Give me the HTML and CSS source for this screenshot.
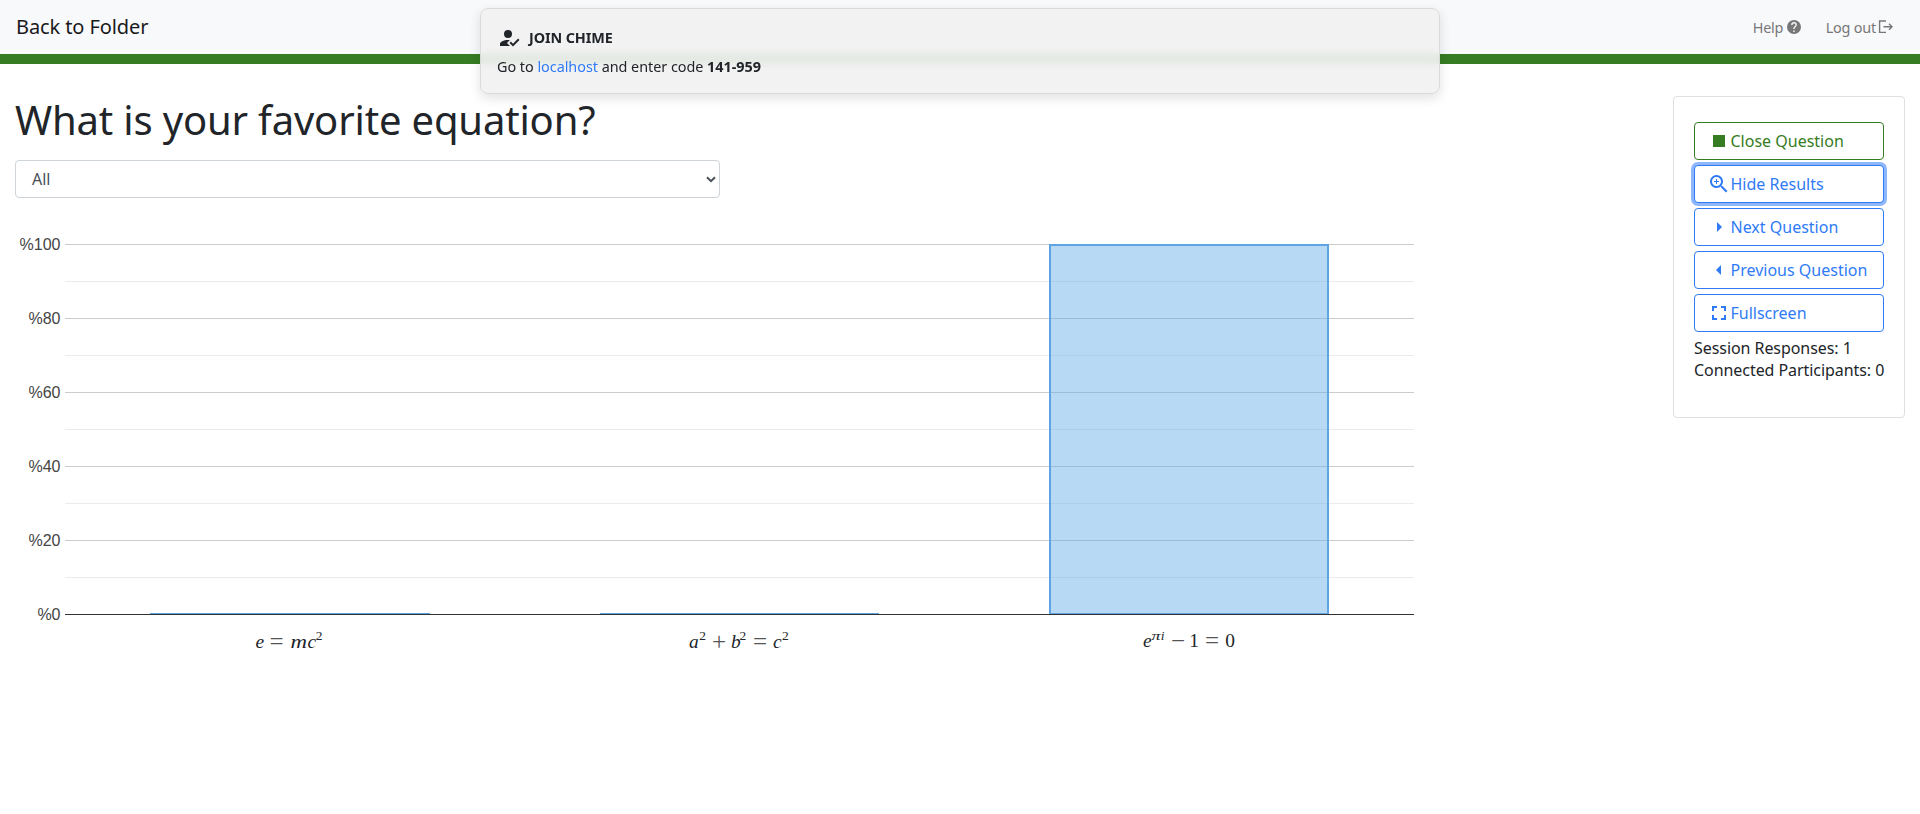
FILE: index.html
```html
<!DOCTYPE html>
<html lang="en">
<head>
<meta charset="utf-8">
<title>Chime</title>
<link rel="stylesheet" href="styles.css">
</head>
<body>
<header class="navbar">
  <a class="brand">Back to Folder</a>
  <nav class="links">
    <a class="link">Help <svg class="link-icon help-icon" viewBox="2 2 20 20"><path d="M12 2a10 10 0 1 0 0 20 10 10 0 0 0 0-20zm1 17h-2v-2h2v2zm2.07-7.75-.9.92C13.45 12.9 13 13.5 13 15h-2v-.5c0-1.1.45-2.1 1.17-2.83l1.24-1.26c.37-.36.59-.86.59-1.41a2 2 0 1 0-4 0H8a4 4 0 1 1 8 0c0 .88-.36 1.68-.93 2.25z"/></svg></a>
    <a class="link">Log out<svg class="link-icon logout-icon" viewBox="0 0 16 14"><path d="M8 1H1.6v11.4H8M5.5 6.7H14M11 3.7l3 3-3 3" fill="none" stroke="currentColor" stroke-width="1.4"/></svg></a>
  </nav>
</header>
<aside class="toast">
  <h2 class="toast-title"><svg class="toast-icon" viewBox="0 0 24 24"><path d="m21.1 12.5 1.4 1.41-6.53 6.59L12.5 17l1.4-1.41 2.07 2.08 5.13-5.17M10 17l3 3H3v-2c0-2.21 3.58-4 8-4l1.89.11L10 17m1-13a4 4 0 1 1 0 8 4 4 0 0 1 0-8z"/></svg>Join Chime</h2>
  <p class="toast-text">Go to <a class="host">localhost</a> and enter code <strong>141-959</strong></p>
</aside>
<div class="page">
  <main class="main">
    <h1 class="question">What is your favorite equation?</h1>
    <div class="select"><span>All</span><svg class="chevron" viewBox="0 0 10 7"><path d="M1 1.2l4 4 4-4" fill="none" stroke="currentColor" stroke-width="2"/></svg></div>
    <svg class="chart" width="1405" height="440" viewBox="15 230 1405 440">
      <g class="minor"><path d="M65 281.5H1414M65 355.5H1414M65 429.5H1414M65 503.5H1414M65 577.5H1414"/></g>
      <g class="major"><path d="M65 244.5H1414M65 318.5H1414M65 392.5H1414M65 466.5H1414M65 540.5H1414"/></g>
      <path class="empty-bar" d="M150 613.5H430M600 613.5H879"/>
      <rect class="bar" x="1050" y="245" width="278" height="369"/>
      <path class="axis" d="M65 614.5H1414"/>
      <g class="ticks">
        <text x="60.5" y="250">%100</text><text x="60.5" y="324">%80</text><text x="60.5" y="398">%60</text><text x="60.5" y="472">%40</text><text x="60.5" y="546">%20</text><text x="60.5" y="620">%0</text>
      </g>
      <g class="math">
        <text class="v" x="255.5" y="648">e</text><text class="op" x="269.5" y="650">=</text><text class="v" x="290.5" y="648" textLength="16.5" lengthAdjust="spacingAndGlyphs">m</text><text class="v" x="307.5" y="648">c</text><text class="sup" x="315.8" y="640">2</text>
        <text class="v" x="689" y="648">a</text><text class="sup" x="699.3" y="640">2</text><text class="op" x="712" y="650">+</text><text class="v" x="731" y="648">b</text><text class="sup" x="739.5" y="640">2</text><text class="op" x="753" y="650">=</text><text class="v" x="773" y="648">c</text><text class="sup" x="782" y="640">2</text>
        <text class="v" x="1143" y="647">e</text><text class="sup v" x="1151.5" y="640" textLength="9" lengthAdjust="spacingAndGlyphs">π</text><text class="sup v" x="1160.8" y="640">i</text><text class="op" x="1171" y="649">−</text><text x="1189.3" y="647">1</text><text class="op" x="1205" y="649">=</text><text x="1225.3" y="647">0</text>
      </g>
    </svg>
  </main>
  <aside class="panel">
    <button class="btn btn-green"><svg class="icon" viewBox="0 0 24 24"><path d="M18 18H6V6h12v12z"/></svg>Close Question</button>
    <button class="btn btn-focus"><svg class="icon" viewBox="0 0 24 24"><path d="m15.5 14 5 5-1.5 1.5-5-5v-.79l-.27-.28A6.5 6.5 0 1 1 14.43 13.73l.28.27h.79m-6 0a4.5 4.5 0 1 0 0-9 4.5 4.5 0 0 0 0 9m2.5-4h-2v2H9v-2H7V9h2V7h1v2h2v1z"/></svg>Hide Results</button>
    <button class="btn"><svg class="icon" viewBox="0 0 24 24"><path d="M10 17l5-5-5-5v10z"/></svg>Next Question</button>
    <button class="btn"><svg class="icon" viewBox="0 0 24 24"><path d="M14 7l-5 5 5 5V7z"/></svg>Previous Question</button>
    <button class="btn"><svg class="icon" viewBox="0 0 24 24"><path d="M5 5h5v2H7v3H5V5m9 0h5v5h-2V7h-3V5m3 9h2v5h-5v-2h3v-3m-7 3v2H5v-5h2v3h3z"/></svg>Fullscreen</button>
    <div class="stats"><div>Session Responses: 1</div><div>Connected Participants: 0</div></div>
  </aside>
</div>
</body>
</html>
```
FILE: styles.css
```css
* { box-sizing: border-box; }
body {
  margin: 0;
  background: #fff;
  color: #212529;
  font: 16px/22px "Noto Sans", sans-serif;
}
svg { fill: currentColor; }
.navbar {
  display: flex;
  justify-content: space-between;
  align-items: center;
  height: 64px;
  padding: 0 26px 0 16px;
  background: #f8f9fb;
  border-bottom: 10px solid #367c22;
}
.brand { font-size: 20px; letter-spacing: -.1px; color: #1a1a1a; }
.links { display: flex; gap: 25px; }
.link { display: flex; align-items: center; font-size: 14.4px; letter-spacing: -.2px; color: #777; white-space: pre; padding-top: 2px; }
.link-icon { height: 14px; margin-top: -3px; }
.help-icon { width: 14px; }
.logout-icon { width: 16px; margin-left: 2px; }
.toast {
  position: absolute;
  top: 8px;
  left: 480px;
  width: 960px;
  height: 86px;
  padding: 18px 16px;
  border: 1px solid #dadada;
  border-radius: 8px;
  background: rgba(241, 241, 241, .92);
  backdrop-filter: blur(4px);
  box-shadow: 0 4px 12px rgba(0, 0, 0, .12);
}
.toast-title { display: flex; align-items: center; gap: 8px; margin: 0 0 7px; font-size: 14.4px; letter-spacing: -.1px; text-transform: uppercase; }
.toast-icon { width: 24px; height: 24px; margin: -1px 0; }
.toast-text { margin: 0; font-size: 14.4px; letter-spacing: -.03px; }
.host { color: #2f7bf6; }
.page { display: flex; justify-content: space-between; align-items: flex-start; padding: 32px 15px 0; }
.question { margin: 0 0 16px; font-size: 40px; font-weight: 400; line-height: 48px; letter-spacing: -.17px; }
.select {
  display: flex;
  justify-content: space-between;
  align-items: center;
  width: 705px;
  height: 38px;
  padding: 0 3px 0 16px;
  border: 1px solid #ced4da;
  border-radius: 4px;
  color: #495057;
}
.chevron { width: 10px; height: 7px; color: #495057; }
.chart { display: block; margin-top: 32px; }
.minor { stroke: #ebebeb; }
.major { stroke: #ccc; }
.axis { stroke: #333; }
.empty-bar { stroke: #5fa4e2; }
.bar { fill: rgba(96, 171, 230, .45); stroke: #5fa4e2; stroke-width: 2; }
.ticks { font: 16px "Liberation Sans", sans-serif; text-anchor: end; fill: #444; }
.math { font: 19.4px "Liberation Serif", serif; fill: #212529; }
.v { font-style: italic; }
.op { font-size: 25px; fill: #555; }
.sup { font-size: 13.5px; }
.panel { display: flex; flex-direction: column; gap: 5px; width: 232px; height: 322px; padding: 25px 20px; border: 1px solid #dfdfdf; border-radius: 4px; }
.btn {
  display: flex;
  align-items: center;
  height: 38px;
  padding: 0 12px 0 11.5px;
  border: 1px solid #2f7bf6;
  border-radius: 4px;
  background: #fff;
  color: #2f7bf6;
  font: 16px/24px "Noto Sans", sans-serif;
  white-space: nowrap;
}
.btn-green { color: #367c22; border-color: #367c22; }
.btn-focus { box-shadow: 0 0 0 3px rgba(47, 123, 246, .55); }
.icon { flex: none; width: 24px; height: 24px; }
.stats { letter-spacing: -.06px; white-space: nowrap; }
```
